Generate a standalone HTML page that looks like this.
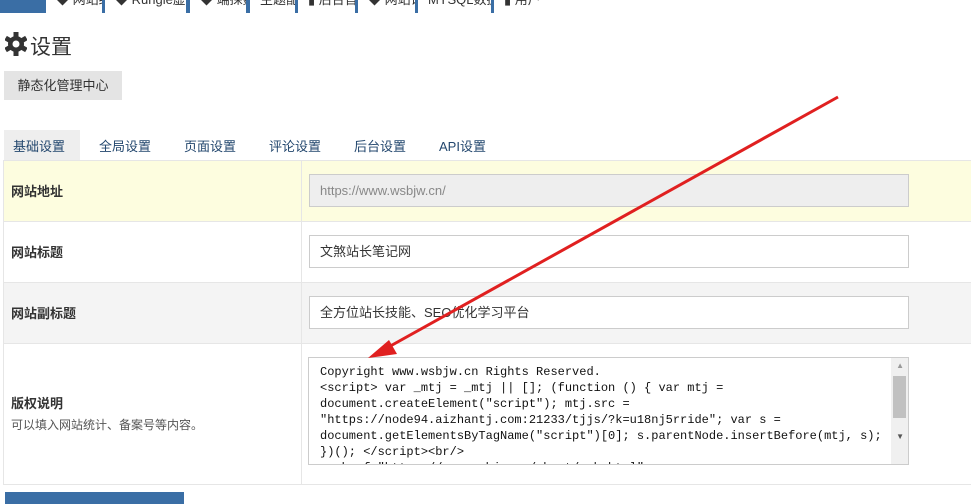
<!DOCTYPE html><html><head><meta charset="utf-8"><style>
*{box-sizing:border-box;margin:0;padding:0}
body{width:971px;height:501px;overflow:hidden;background:#fff;font-family:"Liberation Sans","Noto Sans CJK SC",sans-serif;font-size:13px;color:#333;position:relative}
.abs{position:absolute;white-space:nowrap}
.tab{position:absolute;top:0;height:13px;background:#fff;font-size:13px;line-height:13px;overflow:hidden;color:#333;padding-left:10px;white-space:nowrap}
.tab span{position:relative;top:-7px}
.row{position:absolute;left:4px;width:967px;border-top:1px solid #e6e6e6}
.lab{position:absolute;left:8px;font-weight:bold;font-size:13px;color:#333}
.inp{position:absolute;left:309px;width:600px;height:33px;border:1px solid #ccc;background:#fff;padding:0 10px;line-height:31px;font-size:13px;color:#333;white-space:nowrap}
</style></head><body>
<div class="abs" style="left:0;top:0;width:971px;height:13px;background:#3a6ea5"></div>
<div class="tab" style="left:46px;width:56px"><span>◆ 网站统计</span></div>
<div class="tab" style="left:105px;width:81px"><span>◆ Rungle虚拟主机</span></div>
<div class="tab" style="left:190px;width:56px"><span>◆ 端採数据</span></div>
<div class="tab" style="left:250px;width:45px"><span>主题配置</span></div>
<div class="tab" style="left:298px;width:57px"><span>▮ 后台首页</span></div>
<div class="tab" style="left:358px;width:57px"><span>◆ 网站设置</span></div>
<div class="tab" style="left:418px;width:73px"><span>MYSQL数据备份</span></div>
<div class="tab" style="left:494px;width:477px"><span>▮ 用户</span></div>

<svg class="abs" style="left:5px;top:31px" width="22" height="26" viewBox="0 0 22 26"><g fill="#333"><circle cx="11" cy="13" r="8"/><rect x="8.5" y="1" width="5" height="24"/><rect x="8.5" y="1" width="5" height="24" transform="rotate(60 11 13)"/><rect x="8.5" y="1" width="5" height="24" transform="rotate(-60 11 13)"/></g><circle cx="11" cy="13" r="3.5" fill="#fff"/></svg>
<div class="abs" style="left:30px;top:31px;font-size:21px;color:#333">设置</div>
<div class="abs" style="left:4px;top:71px;width:118px;height:29px;background:#e4e4e4;line-height:29px;text-align:center;font-size:13px;color:#333">静态化管理中心</div>

<div class="abs" style="left:4px;top:130px;width:76px;height:30px;background:#eee"></div>
<div class="abs" style="left:13px;top:136px;color:#23476e;font-size:13px">基础设置</div>
<div class="abs" style="left:99px;top:136px;color:#23476e">全局设置</div>
<div class="abs" style="left:184px;top:136px;color:#23476e">页面设置</div>
<div class="abs" style="left:269px;top:136px;color:#23476e">评论设置</div>
<div class="abs" style="left:354px;top:136px;color:#23476e">后台设置</div>
<div class="abs" style="left:439px;top:136px;color:#23476e">API设置</div>

<div class="row" style="top:160px;height:61px;background:#fdfddf"></div>
<div class="row" style="top:221px;height:61px;background:#fff"></div>
<div class="row" style="top:282px;height:61px;background:#f4f4f4"></div>
<div class="row" style="top:343px;height:142px;background:#fff;border-bottom:1px solid #e6e6e6"></div>
<div class="abs" style="left:3px;top:160px;width:1px;height:325px;background:#e6e6e6"></div>
<div class="abs" style="left:301px;top:160px;width:1px;height:325px;background:#e6e6e6"></div>

<div class="lab" style="top:181px;left:11px">网站地址</div>
<div class="lab" style="top:242px;left:11px">网站标题</div>
<div class="lab" style="top:303px;left:11px">网站副标题</div>
<div class="lab" style="top:393px;left:11px">版权说明</div>
<div class="abs" style="left:11px;top:416px;font-size:12px;color:#555">可以填入网站统计、备案号等内容。</div>

<div class="inp" style="top:174px;background:#eee;color:#888">https://www.wsbjw.cn/</div>
<div class="inp" style="top:235px">文煞站长笔记网</div>
<div class="inp" style="top:296px">全方位站长技能、SEO优化学习平台</div>

<div class="abs" style="left:308px;top:357px;width:601px;height:108px;border:1px solid #ccc;overflow:hidden;background:#fff">
<div style="padding:6px 0 0 11px;font-family:'Liberation Mono','Noto Serif CJK SC',monospace;font-size:12px;line-height:16px;color:#111;width:580px;white-space:pre">Copyright www.wsbjw.cn Rights Reserved.
&lt;script&gt; var _mtj = _mtj || []; (function () { var mtj =
document.createElement("script"); mtj.src =
"https://node94.aizhantj.com:21233/tjjs/?k=u18nj5rride"; var s =
document.getElementsByTagName("script")[0]; s.parentNode.insertBefore(mtj, s);
})(); &lt;/script&gt;&lt;br/&gt;
&lt;a href="https://www.wsbjw.cn/about/sub.html"&gt;</div>
<div class="abs" style="right:0;top:0;width:17px;height:106px;background:#f0f0f0"></div>
<div class="abs" style="right:2px;top:18px;width:13px;height:42px;background:#c1c1c1"></div>
<div class="abs" style="right:4px;top:3px;font-size:8px;color:#999">▲</div>
<div class="abs" style="right:4px;top:74px;font-size:8px;color:#555">▼</div>
</div>

<div class="abs" style="left:5px;top:492px;width:179px;height:12px;background:#3a6ea5"></div>

<svg class="abs" style="left:0;top:0" width="971" height="501"><line x1="838" y1="97" x2="385" y2="349" stroke="#e02020" stroke-width="3"/><polygon points="368,358 389,340 397,354" fill="#e02020"/></svg>
</body></html>
